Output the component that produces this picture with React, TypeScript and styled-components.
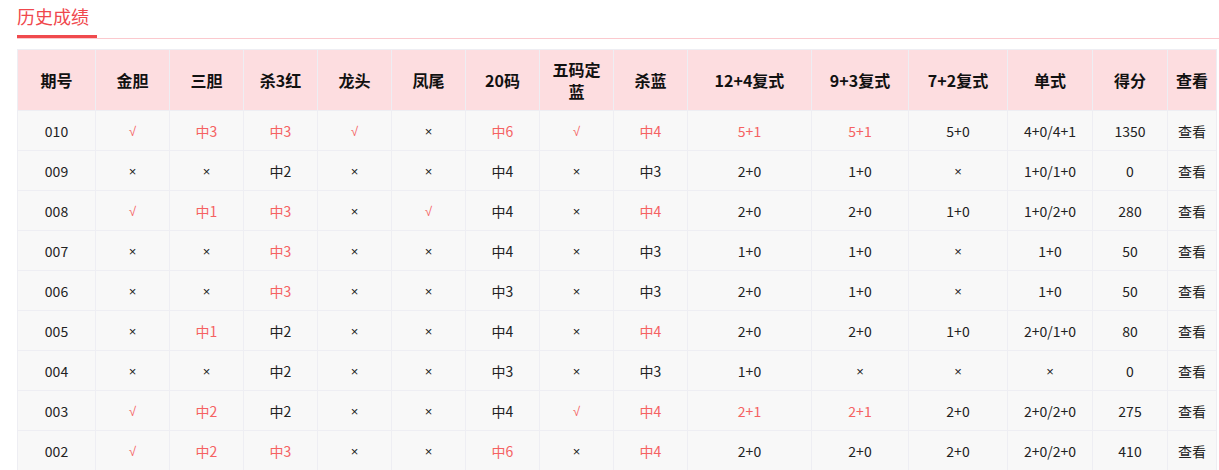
import * as React from "react"
import styled, { createGlobalStyle } from "styled-components"

const GlobalStyle = createGlobalStyle`
  body {
    margin: 0;
    background: #ffffff;
    font-family: "Noto Sans CJK SC", "Noto Sans", sans-serif;
  }
`

const headers: React.ReactNode[] = [
  "期号", "金胆", "三胆", "杀3红", "龙头", "凤尾", "20码",
  <>五码定<br />蓝</>,
  "杀蓝", "12+4复式", "9+3复式", "7+2复式", "单式", "得分", "查看",
]

const widths = [78, 74, 74, 74, 74, 74, 74, 74, 74, 124, 97, 99, 85, 75, 49]

// a trailing * marks a hit (red text)
const rows = [
  "010 √* 中3* 中3* √* × 中6* √* 中4* 5+1* 5+1* 5+0 4+0/4+1 1350",
  "009 × × 中2 × × 中4 × 中3 2+0 1+0 × 1+0/1+0 0",
  "008 √* 中1* 中3* × √* 中4 × 中4* 2+0 2+0 1+0 1+0/2+0 280",
  "007 × × 中3* × × 中4 × 中3 1+0 1+0 × 1+0 50",
  "006 × × 中3* × × 中3 × 中3 2+0 1+0 × 1+0 50",
  "005 × 中1* 中2 × × 中4 × 中4* 2+0 2+0 1+0 2+0/1+0 80",
  "004 × × 中2 × × 中3 × 中3 1+0 × × × 0",
  "003 √* 中2* 中2 × × 中4 √* 中4* 2+1* 2+1* 2+0 2+0/2+0 275",
  "002 √* 中2* 中3* × × 中6* × 中4* 2+0 2+0 2+0 2+0/2+0 410",
].map((line) => line.split(" "))

const App = () => (
  <Page>
    <GlobalStyle />
    <TitleBar>
      <Title>历史成绩</Title>
    </TitleBar>
    <Table>
      <colgroup>
        {widths.map((w, i) => (
          <col key={i} style={{ width: w }} />
        ))}
      </colgroup>
      <thead>
        <tr>
          {headers.map((h, i) => (
            <HeadCell key={i}>{h}</HeadCell>
          ))}
        </tr>
      </thead>
      <tbody>
        {rows.map((r) => (
          <tr key={r[0]}>
            {r.map((c, i) => {
              const hit = c.endsWith("*")
              const text = hit ? c.slice(0, -1) : c
              return (
                <Cell key={i} $hit={hit}>
                  {text === "√" || text === "×" ? <Mark>{text}</Mark> : text}
                </Cell>
              )
            })}
            <Cell $hit={false}>查看</Cell>
          </tr>
        ))}
      </tbody>
    </Table>
  </Page>
)

export default App

const Page = styled.div`
  padding: 0 0 0 17px;
  overflow: hidden;
`

const TitleBar = styled.div`
  border-bottom: 1px solid #fbc9ce;
  height: 38px;
`

const Title = styled.div`
  display: inline-block;
  width: 80px;
  height: 35px;
  font-size: 18px;
  line-height: 32px;
  color: #f0474d;
  border-bottom: 3px solid #f04a4d;
`

const Table = styled.table`
  margin-top: 10px;
  width: 1199px;
  table-layout: fixed;
  border-collapse: collapse;
`

const HeadCell = styled.th`
  height: 60px;
  padding: 0;
  background: #fddde0;
  border: 1px solid #eeeef3;
  font-size: 16px;
  font-weight: bold;
  line-height: 22px;
  color: #111111;
  text-align: center;
  white-space: nowrap;
`

const Cell = styled.td<{ $hit: boolean }>`
  height: 39px;
  padding: 0;
  background: #f8f8f8;
  border: 1px solid #eeeef3;
  font-size: 14px;
  line-height: 20px;
  color: ${(p) => (p.$hit ? "#f56262" : "#222222")};
  text-align: center;
  white-space: nowrap;
`

const Mark = styled.span`
  font-family: "Liberation Sans", sans-serif;
  font-size: 13px;
`
